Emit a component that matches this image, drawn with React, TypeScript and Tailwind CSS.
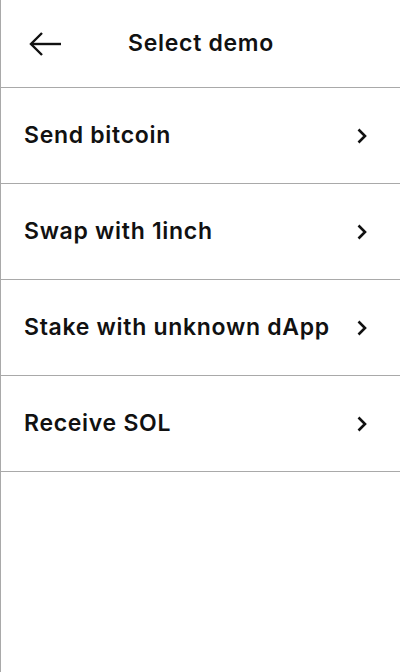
import React from "react";

const items = ["Send bitcoin", "Swap with 1inch", "Stake with unknown dApp", "Receive SOL"];

export default function App() {
  return (
    <div
      className="w-[400px] h-[672px] bg-white border-l border-[#a9a9a9] text-[#111] flex flex-col"
      style={{ fontFamily: "Inter, 'Noto Sans', sans-serif" }}
    >
      <div className="relative h-[88px] border-b border-[#a9a9a9] flex items-center justify-center">
        <svg
          className="absolute left-[27px] top-[30px]"
          width="34"
          height="28"
          viewBox="0 0 34 28"
          fill="none"
          stroke="#111"
          strokeWidth="2.4"
          strokeLinecap="butt"
          strokeLinejoin="miter"
        >
          <path d="M33 14H3" />
          <path d="M14 3L3 14l11 11" />
        </svg>
        <span className="text-[23px] font-semibold tracking-[0.7px] pl-[1px]">Select demo</span>
      </div>
      {items.map((t) => (
        <div key={t} className="h-[96px] border-b border-[#a9a9a9] flex items-center justify-between pl-[23px] pr-[32px]">
          <span className="text-[23px] font-semibold tracking-[0.7px]">{t}</span>
          <svg width="12" height="18" viewBox="0 0 12 18" fill="none" stroke="#111" strokeWidth="2.6" strokeLinecap="butt">
            <path d="M2.5 2.5l6.5 6.5-6.5 6.5" />
          </svg>
        </div>
      ))}
    </div>
  );
}
